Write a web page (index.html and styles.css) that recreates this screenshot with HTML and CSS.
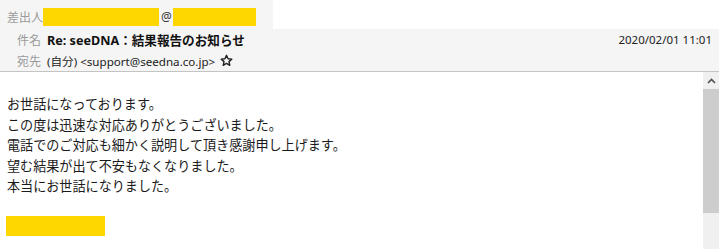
FILE: index.html
```html
<!DOCTYPE html>
<html lang="ja">
<head>
    <meta charset="UTF-8">
    <title>結果報告のお知らせ</title>
    <link rel="stylesheet" href="styles.css">
</head>
<body>
    <div class="mail">
        <div class="header">
            <div class="row row-from">
                <div class="from-box">
                    <span class="label">差出人</span>
                    <span class="mask mask-name"></span>
                    <span class="at">@</span>
                    <span class="mask mask-domain"></span>
                </div>
            </div>
            <div class="row row-sub">
                <span class="label">件名</span>
                <span class="subject">Re: seeDNA：結果報告のお知らせ</span>
                <span class="date">2020/02/01 11:01</span>
            </div>
            <div class="row row-sub">
                <span class="label">宛先</span>
                <span class="to">(自分) &lt;support@seedna.co.jp&gt;</span>
                <svg class="star" width="13" height="13" viewBox="0 0 24 24">
                    <path d="M12 2.5l2.9 6.3 6.9.7-5.2 4.6 1.5 6.8L12 17.4l-6.1 3.5 1.5-6.8-5.2-4.6 6.9-.7z" fill="none" stroke="#222" stroke-width="2.6" stroke-linejoin="round"/>
                </svg>
            </div>
        </div>

        <div class="body">
            <div class="content">
                <p>お世話になっております。</p>
                <p>この度は迅速な対応ありがとうございました。</p>
                <p>電話でのご対応も細かく説明して頂き感謝申し上げます。</p>
                <p>望む結果が出て不安もなくなりました。</p>
                <p>本当にお世話になりました。</p>
                <div class="mask mask-sign"></div>
            </div>
            <div class="scrollbar">
                <div class="arrow">
                    <svg width="9" height="6" viewBox="0 0 9 6">
                        <path d="M1 5l3.5-3.5L8 5" fill="none" stroke="#505050" stroke-width="1.6"/>
                    </svg>
                </div>
                <div class="thumb"></div>
                <div class="track"></div>
            </div>
        </div>
    </div>
</body>
</html>
```

FILE: styles.css
```css
body {
    margin: 0;
    background: #ffffff;
    font-family: "Noto Sans", "Noto Sans CJK JP", sans-serif;
    color: #1a1a1a;
}

.mail {
    width: 719px;
    height: 249px;
    display: flex;
    flex-direction: column;
    overflow: hidden;
}

.header {
    background: #f5f5f5;
    border-bottom: 1px solid #c4c4c4;
    height: 72px;
    box-sizing: border-box;
}

.row {
    display: flex;
    align-items: center;
    font-size: 12px;
}

.row-from {
    height: 29px;
    background: #ffffff;
}

.from-box {
    width: 273px;
    height: 29px;
    background: #f5f5f5;
    display: flex;
    align-items: center;
    padding-left: 7px;
    box-sizing: border-box;
    padding-top: 4px;
}

.row-sub {
    height: 21px;
    padding-left: 17px;
}

.label {
    color: #9a9a9a;
    margin-right: 6px;
}

.from-box .label {
    margin-right: 0;
}

.mask {
    display: inline-block;
    background: #ffd700;
}

.mask-name {
    width: 116px;
    height: 18px;
}

.at {
    color: #333;
    margin: 0 1px 0 2px;
}

.mask-domain {
    width: 83px;
    height: 18px;
}

.subject {
    font-weight: 700;
    font-size: 12.6px;
    color: #111;
}

.date {
    margin-left: auto;
    margin-right: 7px;
    font-size: 11.5px;
    color: #222;
}

.to {
    color: #222;
    font-size: 11.6px;
}

.star {
    margin-left: 5px;
}

.body {
    flex: 1;
    display: flex;
    min-height: 0;
}

.content {
    flex: 1;
    padding: 22px 7px 0;
    font-size: 13.1px;
    line-height: 20.6px;
}

.content p {
    margin: 0;
}

.mask-sign {
    display: block;
    width: 99px;
    height: 20px;
    margin-top: 19px;
    margin-left: -1px;
}

.scrollbar {
    width: 16px;
    background: #f0f0f0;
    display: flex;
    flex-direction: column;
}

.arrow {
    height: 17px;
    display: flex;
    align-items: center;
    justify-content: center;
}

.thumb {
    height: 124px;
    background: #cdcdcd;
}

.track {
    flex: 1;
}
```
